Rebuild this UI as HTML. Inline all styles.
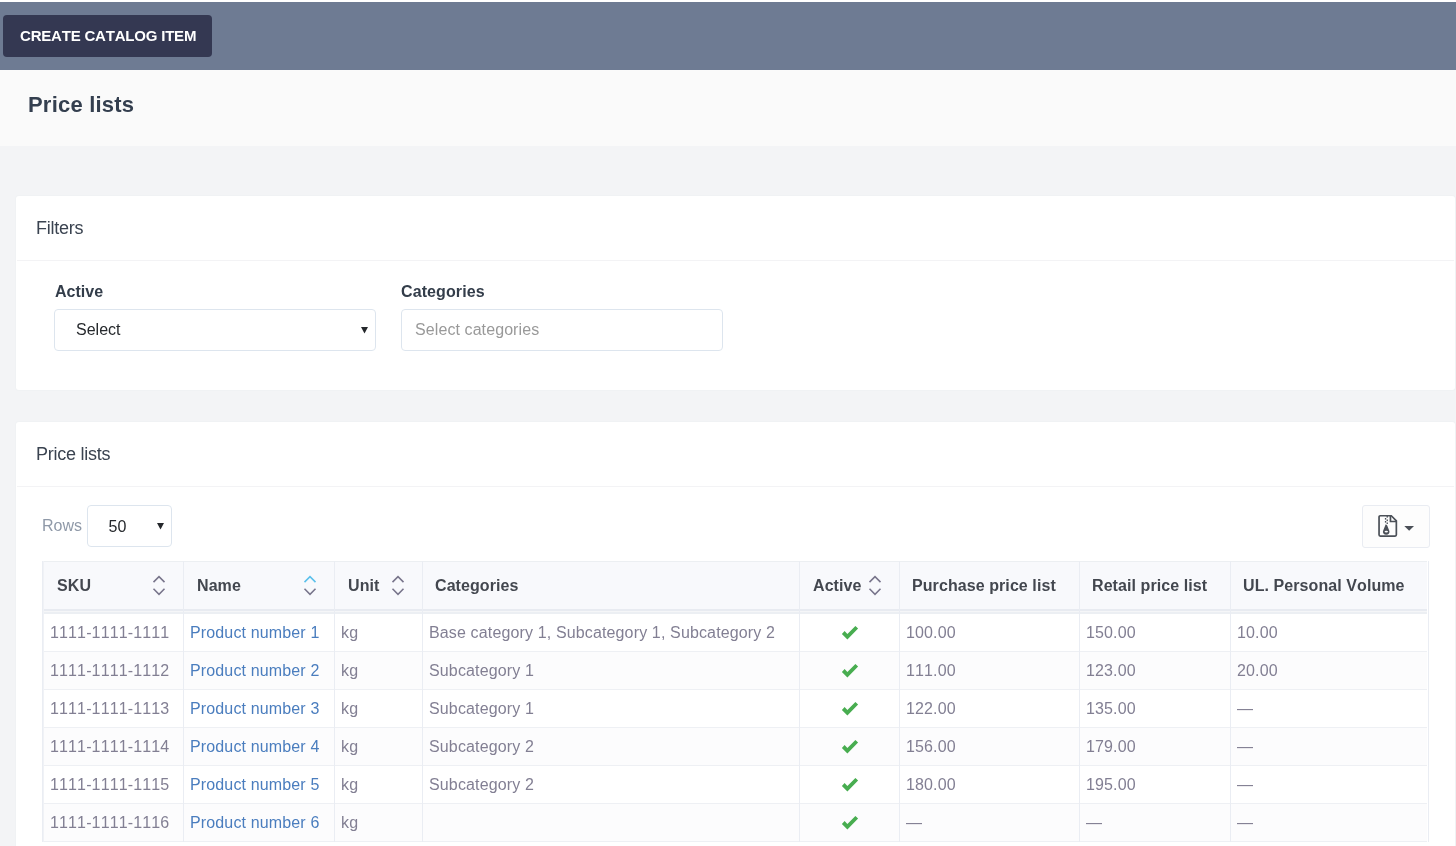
<!DOCTYPE html>
<html><head><meta charset="utf-8">
<style>
*{box-sizing:border-box;}
html,body{margin:0;padding:0;}
body{width:1456px;height:846px;overflow:hidden;-webkit-font-smoothing:antialiased;background:#f3f4f6;font-family:"Liberation Sans",sans-serif;font-kerning:none;position:relative;}
.abs{position:absolute;}
#createbtn,#pagetitle,.cardtitle,.label,.selbox{will-change:transform;}
.t{position:absolute;white-space:nowrap;will-change:transform;}
#topwhite{left:0;top:0;width:1456px;height:2px;background:#fff;}
#topbar{left:0;top:2px;width:1456px;height:68px;background:#6e7b93;}
#createbtn{left:3px;top:15px;width:209px;height:42px;background:#343852;border-radius:4px;color:#fff;font-weight:700;font-size:15px;line-height:42px;padding-left:17px;letter-spacing:-0.2px;}
#pagehead{left:0;top:70px;width:1456px;height:76px;background:#fafafa;}
#pagetitle{left:28px;top:92px;font-size:22px;font-weight:700;color:#343f4f;line-height:26px;letter-spacing:0.2px;}
.card{background:#fff;border-radius:3px;left:16px;width:1439px;box-shadow:0 0 0 1px #f0f2f4;}
.cardtitle{position:absolute;font-size:18px;color:#3a4350;line-height:22px;letter-spacing:-0.25px;}
.divider{position:absolute;left:17px;width:1437px;height:1px;background:#f3f3f5;}
.label{position:absolute;font-size:16px;font-weight:700;color:#333d4a;line-height:20px;}
.selbox{position:absolute;border:1px solid #dde5ee;border-radius:4px;background:#fff;height:42px;font-size:16px;line-height:40px;}
.hd{font-size:16px;font-weight:700;color:#43474f;line-height:20px;letter-spacing:0.08px;}
.bd{font-size:16px;color:#827f93;line-height:20px;letter-spacing:0.14px;}
.lk{color:#4a7dbe;}
</style></head>
<body>
<div id="topwhite" class="abs"></div>
<div id="topbar" class="abs"></div>
<div id="createbtn" class="abs">CREATE CATALOG ITEM</div>
<div id="pagehead" class="abs"></div>
<div id="pagetitle" class="abs">Price lists</div>

<div class="abs card" style="top:196px;height:194px"></div>
<div class="cardtitle" style="left:36px;top:217px">Filters</div>
<div class="divider" style="top:260px"></div>
<div class="label" style="left:54.5px;top:282px">Active</div>
<div class="selbox" style="left:54px;top:309px;width:322px;color:#25282c;padding-left:21px">Select</div>
<svg class="abs" style="left:0;top:0" width="1456" height="846"><polygon points="361,327 368,327 364.5,333.5" fill="#25282c"/></svg>
<div class="label" style="left:401px;top:282px;letter-spacing:0.1px">Categories</div>
<div class="selbox" style="left:401px;top:309px;width:322px;color:#999;padding-left:13px;letter-spacing:0.09px">Select categories</div>

<div class="abs card" style="top:422px;height:430px"></div>
<div class="cardtitle" style="left:36px;top:443px">Price lists</div>
<div class="divider" style="top:486px"></div>
<div class="t bd" style="left:42px;top:516px;color:#8f99a8;letter-spacing:0">Rows</div>
<div class="selbox" style="left:87px;top:505px;width:85px;color:#25282c;padding-left:20.5px;padding-top:1px">50</div>
<svg class="abs" style="left:150px;top:515px" width="20" height="20"><polygon points="7,8 14,8 10.5,14.5" fill="#25282c"/></svg>
<div class="abs" style="left:1362px;top:505px;width:68px;height:43px;border:1px solid #e9ecf2;border-radius:3px;background:#fdfdfd"></div>
<svg class="abs" style="left:1376px;top:513px" width="42" height="26" viewBox="0 0 42 26">
<path d="M4.3 2.75 L15.3 2.75 L20.35 7.8 L20.35 21.8 Q20.35 23.05 19.1 23.05 L4.3 23.05 Q3.05 23.05 3.05 21.8 L3.05 4 Q3.05 2.75 4.3 2.75 Z" fill="none" stroke="#4b5058" stroke-width="1.7"/>
<path d="M14.45 2.75 L14.45 8.5 L20.35 8.5" fill="none" stroke="#4b5058" stroke-width="1.7"/>
<rect x="10.6" y="3" width="1.3" height="1.6" fill="#4b5058"/>
<rect x="8.9" y="5" width="1.3" height="1.6" fill="#4b5058"/>
<rect x="10.6" y="6.5" width="1.3" height="1.6" fill="#4b5058"/>
<rect x="8.9" y="8" width="1.3" height="1.6" fill="#4b5058"/>
<rect x="10.6" y="9.5" width="1.3" height="1.5" fill="#4b5058"/>
<path d="M9.7 11.3 L11.1 12.2 L13.2 17.6 A3.3 3 0 1 1 7.2 17.6 Z" fill="#4b5058"/>
<ellipse cx="10.3" cy="18.6" rx="1.7" ry="0.95" fill="#fdfdfd"/>
<polygon points="28.3,12.9 38,12.9 33.15,17.8" fill="#4b5058"/>
</svg>

<div class="abs" style="left:42px;top:561px;width:1385px;height:48px;background:#f8f9fc;border-top:1px solid #eceff2"></div>
<div class="abs" style="left:42px;top:609px;width:1385px;height:2px;background:#e8ebf1"></div>
<div class="abs" style="left:42px;top:611px;width:1385px;height:1px;background:#f5f6f8"></div>
<div class="abs" style="left:42px;top:612px;width:1385px;height:2px;background:#eceff3"></div>
<div class="abs" style="left:42px;top:652px;width:1385px;height:37px;background:#fcfcfd"></div>
<div class="abs" style="left:42px;top:728px;width:1385px;height:37px;background:#fcfcfd"></div>
<div class="abs" style="left:42px;top:804px;width:1385px;height:37px;background:#fcfcfd"></div>
<div class="abs" style="left:42px;top:651px;width:1385px;height:1px;background:#eef0f4"></div>
<div class="abs" style="left:42px;top:689px;width:1385px;height:1px;background:#eef0f4"></div>
<div class="abs" style="left:42px;top:727px;width:1385px;height:1px;background:#eef0f4"></div>
<div class="abs" style="left:42px;top:765px;width:1385px;height:1px;background:#eef0f4"></div>
<div class="abs" style="left:42px;top:803px;width:1385px;height:1px;background:#eef0f4"></div>
<div class="abs" style="left:42px;top:841px;width:1385px;height:1px;background:#eef0f4"></div>
<div class="abs" style="left:42px;top:561px;width:1px;height:281px;background:#eaedf3"></div>
<div class="abs" style="left:183px;top:561px;width:1px;height:281px;background:#eaedf3"></div>
<div class="abs" style="left:334px;top:561px;width:1px;height:281px;background:#eaedf3"></div>
<div class="abs" style="left:422px;top:561px;width:1px;height:281px;background:#eaedf3"></div>
<div class="abs" style="left:799px;top:561px;width:1px;height:281px;background:#eaedf3"></div>
<div class="abs" style="left:899px;top:561px;width:1px;height:281px;background:#eaedf3"></div>
<div class="abs" style="left:1079px;top:561px;width:1px;height:281px;background:#eaedf3"></div>
<div class="abs" style="left:1230px;top:561px;width:1px;height:281px;background:#eaedf3"></div>
<div class="abs" style="left:1428px;top:561px;width:1px;height:281px;background:#eaedf3"></div>
<div class="abs" style="left:43px;top:561px;width:1px;height:281px;background:#f0f2f6"></div>
<div class="t hd" style="left:57px;top:576px">SKU</div>
<div class="t hd" style="left:197px;top:576px">Name</div>
<div class="t hd" style="left:348px;top:576px">Unit</div>
<div class="t hd" style="left:435px;top:576px">Categories</div>
<div class="t hd" style="left:813px;top:576px">Active</div>
<div class="t hd" style="left:912px;top:576px">Purchase price list</div>
<div class="t hd" style="left:1092px;top:576px">Retail price list</div>
<div class="t hd" style="left:1243px;top:576px">UL. Personal Volume</div>
<svg class="abs" style="left:152px;top:575px" width="14" height="22" viewBox="0 0 14 22"><path d="M1.5 7.1 L7 1.6 L12.5 7.1" fill="none" stroke="#78758b" stroke-width="1.55"/><path d="M1.5 13.8 L7 19.3 L12.5 13.8" fill="none" stroke="#78758b" stroke-width="1.55"/></svg>
<svg class="abs" style="left:303px;top:575px" width="14" height="22" viewBox="0 0 14 22"><path d="M1.5 7.1 L7 1.6 L12.5 7.1" fill="none" stroke="#5bc0eb" stroke-width="1.55"/><path d="M1.5 13.8 L7 19.3 L12.5 13.8" fill="none" stroke="#78758b" stroke-width="1.55"/></svg>
<svg class="abs" style="left:391px;top:575px" width="14" height="22" viewBox="0 0 14 22"><path d="M1.5 7.1 L7 1.6 L12.5 7.1" fill="none" stroke="#78758b" stroke-width="1.55"/><path d="M1.5 13.8 L7 19.3 L12.5 13.8" fill="none" stroke="#78758b" stroke-width="1.55"/></svg>
<svg class="abs" style="left:868px;top:575px" width="14" height="22" viewBox="0 0 14 22"><path d="M1.5 7.1 L7 1.6 L12.5 7.1" fill="none" stroke="#78758b" stroke-width="1.55"/><path d="M1.5 13.8 L7 19.3 L12.5 13.8" fill="none" stroke="#78758b" stroke-width="1.55"/></svg>
<div class="t bd" style="left:50px;top:623px">1111-1111-1111</div>
<div class="t bd lk" style="left:190px;top:623px">Product number 1</div>
<div class="t bd" style="left:341px;top:623px">kg</div>
<div class="t bd" style="left:429px;top:623px">Base category 1, Subcategory 1, Subcategory 2</div>
<svg class="abs" style="left:841px;top:625px" width="19" height="16" viewBox="0 0 19 16"><path d="M0.9 8.9 L3.6 6.1 L6.4 8.9 L14.4 0.9 L17.1 3.6 L6.4 14.6 Z" fill="#48ad50"/></svg>
<div class="t bd" style="left:906px;top:623px">100.00</div>
<div class="t bd" style="left:1086px;top:623px">150.00</div>
<div class="t bd" style="left:1237px;top:623px">10.00</div>
<div class="t bd" style="left:50px;top:661px">1111-1111-1112</div>
<div class="t bd lk" style="left:190px;top:661px">Product number 2</div>
<div class="t bd" style="left:341px;top:661px">kg</div>
<div class="t bd" style="left:429px;top:661px">Subcategory 1</div>
<svg class="abs" style="left:841px;top:663px" width="19" height="16" viewBox="0 0 19 16"><path d="M0.9 8.9 L3.6 6.1 L6.4 8.9 L14.4 0.9 L17.1 3.6 L6.4 14.6 Z" fill="#48ad50"/></svg>
<div class="t bd" style="left:906px;top:661px">111.00</div>
<div class="t bd" style="left:1086px;top:661px">123.00</div>
<div class="t bd" style="left:1237px;top:661px">20.00</div>
<div class="t bd" style="left:50px;top:699px">1111-1111-1113</div>
<div class="t bd lk" style="left:190px;top:699px">Product number 3</div>
<div class="t bd" style="left:341px;top:699px">kg</div>
<div class="t bd" style="left:429px;top:699px">Subcategory 1</div>
<svg class="abs" style="left:841px;top:701px" width="19" height="16" viewBox="0 0 19 16"><path d="M0.9 8.9 L3.6 6.1 L6.4 8.9 L14.4 0.9 L17.1 3.6 L6.4 14.6 Z" fill="#48ad50"/></svg>
<div class="t bd" style="left:906px;top:699px">122.00</div>
<div class="t bd" style="left:1086px;top:699px">135.00</div>
<div class="t bd" style="left:1237px;top:699px">—</div>
<div class="t bd" style="left:50px;top:737px">1111-1111-1114</div>
<div class="t bd lk" style="left:190px;top:737px">Product number 4</div>
<div class="t bd" style="left:341px;top:737px">kg</div>
<div class="t bd" style="left:429px;top:737px">Subcategory 2</div>
<svg class="abs" style="left:841px;top:739px" width="19" height="16" viewBox="0 0 19 16"><path d="M0.9 8.9 L3.6 6.1 L6.4 8.9 L14.4 0.9 L17.1 3.6 L6.4 14.6 Z" fill="#48ad50"/></svg>
<div class="t bd" style="left:906px;top:737px">156.00</div>
<div class="t bd" style="left:1086px;top:737px">179.00</div>
<div class="t bd" style="left:1237px;top:737px">—</div>
<div class="t bd" style="left:50px;top:775px">1111-1111-1115</div>
<div class="t bd lk" style="left:190px;top:775px">Product number 5</div>
<div class="t bd" style="left:341px;top:775px">kg</div>
<div class="t bd" style="left:429px;top:775px">Subcategory 2</div>
<svg class="abs" style="left:841px;top:777px" width="19" height="16" viewBox="0 0 19 16"><path d="M0.9 8.9 L3.6 6.1 L6.4 8.9 L14.4 0.9 L17.1 3.6 L6.4 14.6 Z" fill="#48ad50"/></svg>
<div class="t bd" style="left:906px;top:775px">180.00</div>
<div class="t bd" style="left:1086px;top:775px">195.00</div>
<div class="t bd" style="left:1237px;top:775px">—</div>
<div class="t bd" style="left:50px;top:813px">1111-1111-1116</div>
<div class="t bd lk" style="left:190px;top:813px">Product number 6</div>
<div class="t bd" style="left:341px;top:813px">kg</div>
<svg class="abs" style="left:841px;top:815px" width="19" height="16" viewBox="0 0 19 16"><path d="M0.9 8.9 L3.6 6.1 L6.4 8.9 L14.4 0.9 L17.1 3.6 L6.4 14.6 Z" fill="#48ad50"/></svg>
<div class="t bd" style="left:906px;top:813px">—</div>
<div class="t bd" style="left:1086px;top:813px">—</div>
<div class="t bd" style="left:1237px;top:813px">—</div>
</body></html>
